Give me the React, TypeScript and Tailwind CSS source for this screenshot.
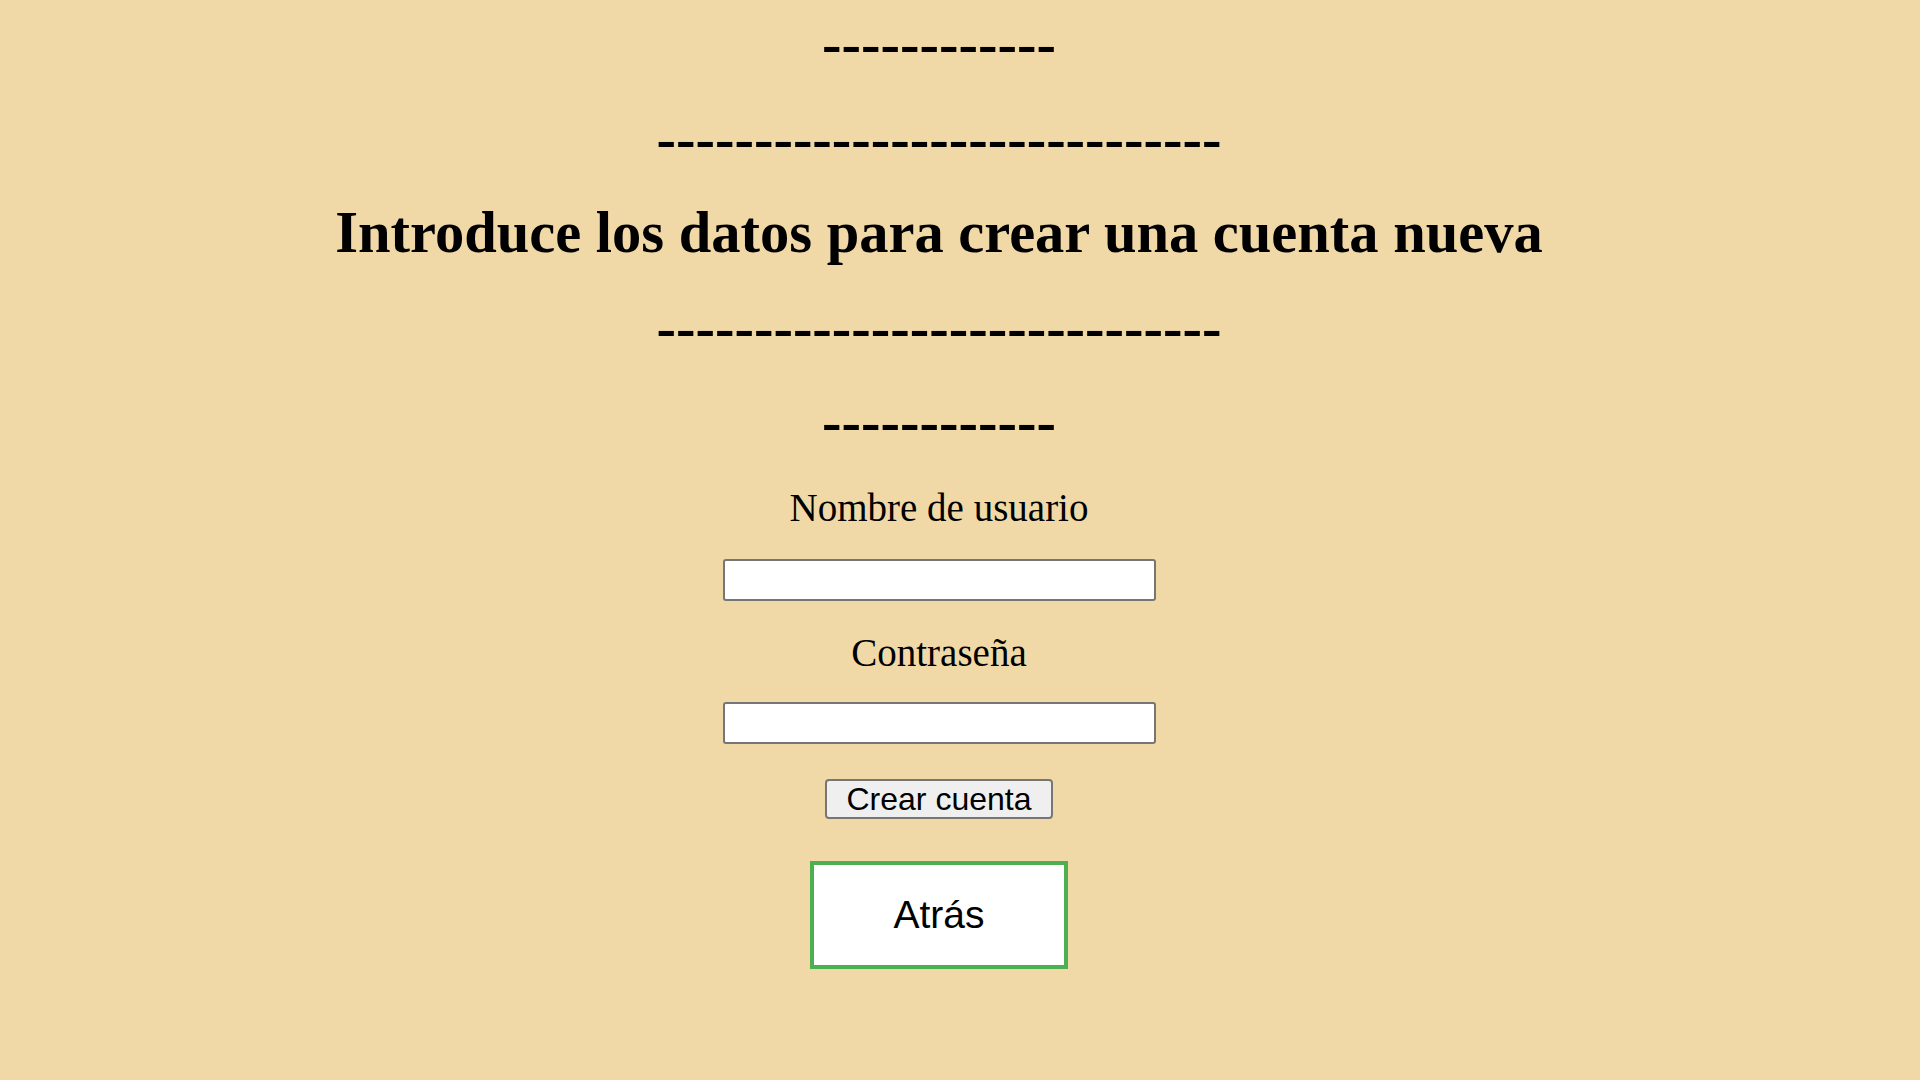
import React from 'react';

const Dashes: React.FC<{ count: number; className?: string }> = ({ count, className = '' }) => (
  <h1 className={`font-['Liberation_Serif',serif] font-bold text-[58.5px] leading-none ${className}`}>
    {'-'.repeat(count)}
  </h1>
);

export default function App() {
  return (
    <div className="min-h-screen w-full bg-[#f0d9a7] text-black">
      <div className="flex flex-col items-center pt-[15px] pr-[42px] text-center">
        <Dashes count={12} />
        <Dashes count={29} className="mt-[36px]" />
        <h1 className="mt-[36px] font-['Liberation_Serif',serif] font-bold text-[58.5px] leading-none">
          Introduce los datos para crear una cuenta nueva
        </h1>
        <Dashes count={29} className="mt-[36px]" />
        <Dashes count={12} className="mt-[36px]" />

        <label className="mt-[36px] font-['Liberation_Serif',serif] text-[39px] leading-none">
          Nombre de usuario
        </label>
        <input
          type="text"
          className="mt-[32px] w-[433px] h-[42px] bg-white border-2 border-[#767676] rounded-[3px] outline-none"
        />

        <label className="mt-[32px] font-['Liberation_Serif',serif] text-[39px] leading-none">
          Contraseña
        </label>
        <input
          type="password"
          className="mt-[30px] w-[433px] h-[42px] bg-white border-2 border-[#767676] rounded-[3px] outline-none"
        />

        <button className="mt-[35px] w-[228px] h-[40px] flex items-center justify-center bg-[#efefef] border-2 border-[#767676] rounded-[4px] font-['Liberation_Sans',Arial,sans-serif] text-[32px] leading-none">
          Crear cuenta
        </button>

        <button className="mt-[42px] w-[258px] h-[108px] flex items-center justify-center bg-white border-4 border-[#4caf50] font-['Liberation_Sans',Arial,sans-serif] text-[39px] leading-none">
          Atrás
        </button>
      </div>
    </div>
  );
}
